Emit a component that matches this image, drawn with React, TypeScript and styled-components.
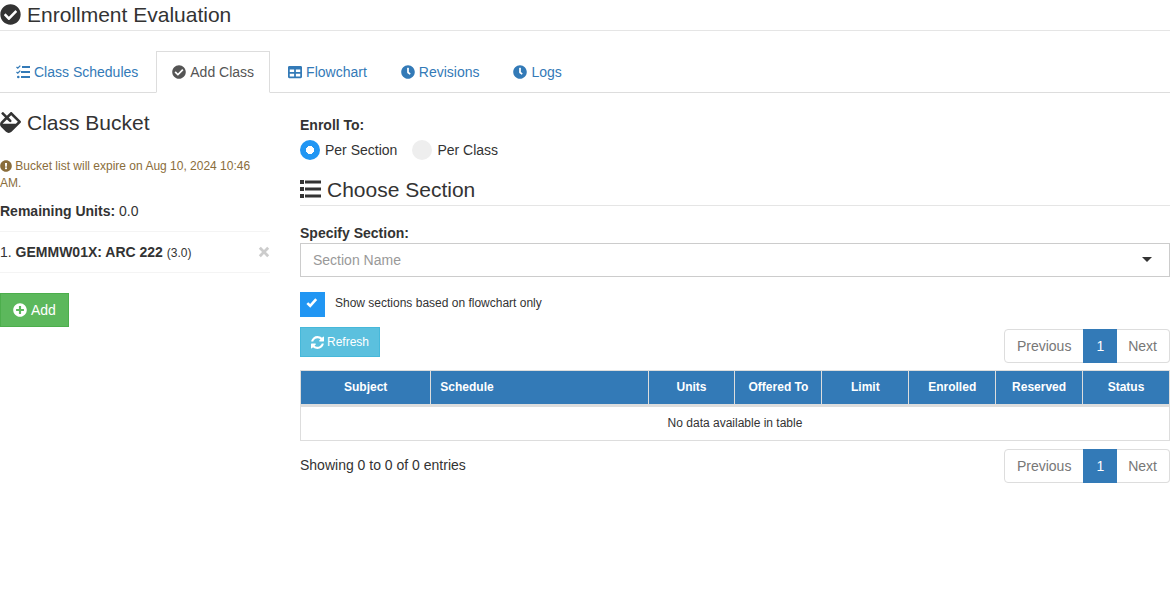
import React from "react";
import styled, { createGlobalStyle, css } from "styled-components";
import {
  FaCheckCircle,
  FaTable,
  FaClock,
  FaFill,
  FaExclamationCircle,
  FaPlusCircle,
} from "react-icons/fa";

const GlobalStyle = createGlobalStyle`
  *, *::before, *::after { box-sizing: border-box; }
  body {
    margin: 0;
    background: #fff;
    color: #333;
    font-family: "Liberation Sans", Arial, sans-serif;
    font-size: 14px;
    line-height: 20px;
  }
  button, input, select { font: inherit; margin: 0; }
`;

const Heading = styled.h1<{ $ruled?: boolean }>`
  display: flex;
  align-items: center;
  gap: 6px;
  margin: 0;
  height: 30px;
  font-size: 21px;
  font-weight: 400;
  line-height: 30px;
  ${(p) =>
    p.$ruled &&
    css`
      box-sizing: content-box;
      border-bottom: 1px solid #e5e5e5;
    `}
  svg { flex: none; margin-bottom: 2px; }
`;

const Tabs = styled.nav`
  display: flex;
  gap: 2px;
  margin-top: 20px;
  border-bottom: 1px solid #ddd;
`;

const Tab = styled.a<{ $active?: boolean }>`
  display: flex;
  align-items: center;
  gap: 4px;
  margin-bottom: -1px;
  padding: 10px 15px;
  border: 1px solid transparent;
  color: #337ab7;
  text-decoration: none;
  ${(p) =>
    p.$active &&
    css`
      color: #555;
      background: #fff;
      border-color: #ddd #ddd #fff;
    `}
`;

const Columns = styled.main`
  display: grid;
  grid-template-columns: calc((100% + 30px) / 4 - 30px) minmax(0, 1fr);
  gap: 30px;
  padding-top: 15px;
`;

const Expiry = styled.p`
  margin: 20px 0 9px;
  color: #8a6d3b;
  font-size: 12px;
  line-height: 17px;
  svg { vertical-align: -2px; }
`;

const Units = styled.p`
  margin: 0 0 10px;
`;

const Bucket = styled.ol`
  list-style: none;
  margin: 0 0 20px;
  padding: 0;
  border-top: 1px solid #f4f4f4;
`;

const BucketItem = styled.li`
  display: flex;
  align-items: center;
  justify-content: space-between;
  padding: 10px 0;
  border-bottom: 1px solid #f4f4f4;
  small { font-size: 12px; line-height: 12px; }
`;

const RemoveButton = styled.button`
  display: flex;
  padding: 0;
  border: 0;
  background: none;
  color: #ccc;
`;

const Button = styled.button<{ $tone: "success" | "info" }>`
  display: inline-flex;
  align-items: center;
  color: #fff;
  ${(p) =>
    p.$tone === "success"
      ? css`
          gap: 4px;
          padding: 6px 12px;
          background: #5cb85c;
          border: 1px solid #4cae4c;
        `
      : css`
          gap: 3px;
          padding: 5px 10px;
          font-size: 12px;
          line-height: 18px;
          background: #5bc0de;
          border: 1px solid #46b8da;
        `}
`;

const Fieldset = styled.fieldset`
  margin: 7px 0 15px;
  padding: 0;
  border: 0;
  legend { padding: 0; margin-bottom: 5px; font-weight: 700; }
`;

const RadioRow = styled.div`
  display: flex;
  gap: 15px;
`;

const RadioLabel = styled.label`
  display: flex;
  align-items: center;
  gap: 5px;
`;

const Radio = styled.input`
  appearance: none;
  width: 20px;
  height: 20px;
  border-radius: 50%;
  background: #eee;
  &:checked {
    background: radial-gradient(circle, #fff 4px, #2196f3 4px);
  }
`;

const FieldLabel = styled.label`
  display: block;
  margin-top: 17px;
  font-weight: 700;
`;

const SelectWrap = styled.div`
  position: relative;
  svg {
    position: absolute;
    right: 18px;
    top: 14px;
    pointer-events: none;
  }
`;

const Select = styled.select`
  display: block;
  appearance: none;
  width: 100%;
  height: 34px;
  padding: 6px 12px;
  border: 1px solid #ccc;
  border-radius: 0;
  background: #fff;
  color: #999;
`;

const CheckRow = styled.label`
  display: flex;
  gap: 10px;
  margin: 15px 0 10px;
  font-size: 12px;
  line-height: 22px;
`;

const CheckBox = styled.span`
  position: relative;
  display: flex;
  width: 25px;
  height: 25px;
  input {
    appearance: none;
    width: 25px;
    height: 25px;
    background: #eee;
  }
  input:checked { background: #2196f3; }
  svg { position: absolute; left: 6px; top: 5px; pointer-events: none; }
`;

const Toolbar = styled.div`
  display: flex;
  justify-content: space-between;
  align-items: flex-start;
  margin-bottom: 7px;
  nav { margin-top: 2px; }
`;

const PageList = styled.nav`
  display: flex;
`;

const PageButton = styled.button<{ $current?: boolean }>`
  height: 34px;
  padding: 6px 12px;
  border: 1px solid #ddd;
  background: #fff;
  color: #777;
  line-height: 20px;
  & + & { margin-left: -1px; }
  &:first-child { border-radius: 4px 0 0 4px; }
  &:last-child { border-left: 0; margin-left: 0; border-radius: 0 4px 4px 0; }
  ${(p) =>
    p.$current &&
    css`
      position: relative;
      border-color: #337ab7;
      background: #337ab7;
      color: #fff;
    `}
`;

const Table = styled.table`
  width: 100%;
  table-layout: fixed;
  border: solid #ddd;
  border-width: 1px 0 0 1px;
  border-spacing: 0;
  font-size: 12px;
  line-height: 17px;
  text-align: center;
  td { padding: 8px; border: solid #ddd; border-width: 0 1px 1px 0; }
`;

const HeadCell = styled.th<{ $width: number; $left?: boolean }>`
  width: ${(p) => p.$width}%;
  padding: 8px 9px;
  border: solid #ddd;
  border-width: 0 1px 3px 0;
  background: #337ab7;
  color: #fff;
  text-align: ${(p) => (p.$left ? "left" : "center")};
`;

const Footer = styled.div`
  display: flex;
  justify-content: space-between;
  margin-top: 8px;
  p { margin: 6px 0 0; }
`;

const ScheduleIcon = ({ size }: { size?: number }) => (
  <svg width={size} height={size} viewBox="0 0 14 14" aria-hidden="true">
    <path d="M6 1h8v2H6zM5 6h9v2H5zM5 11h9v2H5z" fill="currentColor" />
    <path
      d="M0.500 2L1.800 3.200L4.300 0.600M0.500 7L1.800 8.200L4.300 5.600"
      fill="none"
      stroke="currentColor"
      strokeWidth="1.300"
    />
    <circle cx="2.300" cy="12" r="1.300" fill="currentColor" />
  </svg>
);

const tabs = [
  { label: "Class Schedules", Icon: ScheduleIcon },
  { label: "Add Class", Icon: FaCheckCircle, active: true },
  { label: "Flowchart", Icon: FaTable },
  { label: "Revisions", Icon: FaClock },
  { label: "Logs", Icon: FaClock },
];

const columns = [
  { label: "Subject", width: 15 },
  { label: "Schedule", width: 25, left: true },
  { label: "Units", width: 10 },
  { label: "Offered To", width: 10 },
  { label: "Limit", width: 10 },
  { label: "Enrolled", width: 10 },
  { label: "Reserved", width: 10 },
  { label: "Status", width: 10 },
];

const ListIcon = () => (
  <svg width="21" height="21" viewBox="0 0 21 21" fill="currentColor" aria-hidden="true">
    <path d="M0 1h4v4H0zM0 8h4v4H0zM0 15h4v4H0z" />
    <path d="M5 1.500h16v3H5zM5 8.500h16v3H5zM5 15.500h16v3H5z" />
  </svg>
);

const RemoveIcon = () => (
  <svg width="12" height="12" viewBox="0 0 12 12" aria-hidden="true">
    <path d="M1.800 1.800L10.200 10.200M10.200 1.800L1.800 10.200" stroke="currentColor" strokeWidth="2.800" />
  </svg>
);

const TickIcon = () => (
  <svg width="12" height="12" viewBox="0 0 12 12" aria-hidden="true">
    <path d="M1.300 6.100L4.200 8.800L10.200 2.200" fill="none" stroke="#fff" strokeWidth="2.600" />
  </svg>
);

const RefreshIcon = () => (
  <svg width="13" height="13" viewBox="0 0 1536 1536" fill="currentColor" aria-hidden="true">
    <path d="M1511 928q0 5-1 7-64 268-268 434.500T764 1536q-146 0-282.500-55T238 1324l-129 129q-19 19-45 19t-45-19-19-45V960q0-26 19-45t45-19h448q26 0 45 19t19 45-19 45l-137 137q71 66 161 102t187 36q134 0 250-65t186-179q11-17 53-117 8-23 30-23h192q13 0 22.500 9.500t9.500 22.500zm25-800v448q0 26-19 45t-45 19h-448q-26 0-45-19t-19-45 19-45l138-138Q969 256 768 256q-134 0-250 65T332 500q-11 17-53 117-8 23-30 23H50q-13 0-22.500-9.500T18 608v-7q65-268 270-434.500T768 0q146 0 284 55.500T1297 212l130-129q19-19 45-19t45 19 19 45z" />
  </svg>
);

const Pagination = ({ label }: { label: string }) => (
  <PageList aria-label={label}>
    <PageButton type="button">Previous</PageButton>
    <PageButton type="button" $current aria-current="page">1</PageButton>
    <PageButton type="button">Next</PageButton>
  </PageList>
);

export default function App() {
  return (
    <>
      <GlobalStyle />
      <Heading $ruled>
        <FaCheckCircle size={21} />
        Enrollment Evaluation
      </Heading>
      <Tabs>
        {tabs.map(({ label, Icon, active }) => (
          <Tab key={label} href="#" $active={active}>
            <Icon size={14} />
            {label}
          </Tab>
        ))}
      </Tabs>
      <Columns>
        <aside>
          <Heading as="h2">
            <FaFill size={21} />
            Class Bucket
          </Heading>
          <Expiry>
            <FaExclamationCircle size={12} /> Bucket list will expire on Aug 10, 2024 10:46 AM.
          </Expiry>
          <Units>
            <strong>Remaining Units:</strong> 0.0
          </Units>
          <Bucket>
            <BucketItem>
              <span>
                1. <strong>GEMMW01X: ARC 222</strong> <small>(3.0)</small>
              </span>
              <RemoveButton type="button" aria-label="Remove class">
                <RemoveIcon />
              </RemoveButton>
            </BucketItem>
          </Bucket>
          <Button type="button" $tone="success">
            <FaPlusCircle size={14} />
            Add
          </Button>
        </aside>
        <section>
          <Fieldset>
            <legend>Enroll To:</legend>
            <RadioRow>
              <RadioLabel>
                <Radio type="radio" name="enroll" defaultChecked />
                Per Section
              </RadioLabel>
              <RadioLabel>
                <Radio type="radio" name="enroll" />
                Per Class
              </RadioLabel>
            </RadioRow>
          </Fieldset>
          <Heading as="h2" $ruled>
            <ListIcon />
            Choose Section
          </Heading>
          <FieldLabel htmlFor="section">Specify Section:</FieldLabel>
          <SelectWrap>
            <Select id="section" defaultValue="">
              <option value="">Section Name</option>
            </Select>
            <svg width="10" height="5" viewBox="0 0 10 5" aria-hidden="true">
              <path d="M0 0H10L5 5Z" fill="#333" />
            </svg>
          </SelectWrap>
          <CheckRow>
            <CheckBox>
              <input type="checkbox" defaultChecked />
              <TickIcon />
            </CheckBox>
            Show sections based on flowchart only
          </CheckRow>
          <Toolbar>
            <Button type="button" $tone="info">
              <RefreshIcon />
              Refresh
            </Button>
            <Pagination label="Top pages" />
          </Toolbar>
          <Table>
            <thead>
              <tr>
                {columns.map((c) => (
                  <HeadCell key={c.label} $width={c.width} $left={c.left}>
                    {c.label}
                  </HeadCell>
                ))}
              </tr>
            </thead>
            <tbody>
              <tr>
                <td colSpan={8}>No data available in table</td>
              </tr>
            </tbody>
          </Table>
          <Footer>
            <p>Showing 0 to 0 of 0 entries</p>
            <Pagination label="Bottom pages" />
          </Footer>
        </section>
      </Columns>
    </>
  );
}
